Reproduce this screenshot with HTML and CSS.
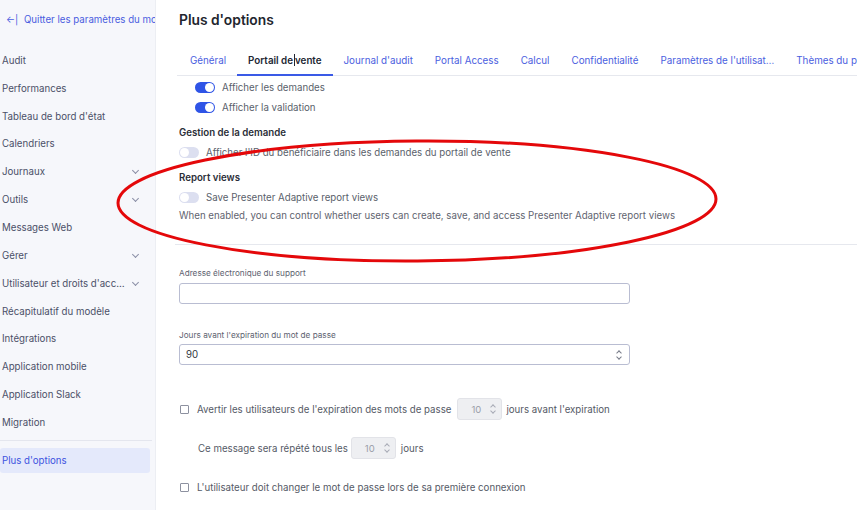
FILE: index.html
```html
<!DOCTYPE html>
<html lang="fr">
<head>
<meta charset="utf-8">
<title>Plus d'options</title>
<link rel="stylesheet" href="styles.css">
</head>
<body>
<div class="app">
  <aside class="sidebar">
    <a class="back"><span class="back-arrow">←|</span> Quitter les paramètres du mo</a>
    <ul class="nav">
      <li class="nav-item">Audit</li>
      <li class="nav-item">Performances</li>
      <li class="nav-item">Tableau de bord d'état</li>
      <li class="nav-item">Calendriers</li>
      <li class="nav-item">Journaux <span class="chev"></span></li>
      <li class="nav-item">Outils <span class="chev"></span></li>
      <li class="nav-item">Messages Web</li>
      <li class="nav-item">Gérer <span class="chev"></span></li>
      <li class="nav-item">Utilisateur et droits d'acc… <span class="chev"></span></li>
      <li class="nav-item">Récapitulatif du modèle</li>
      <li class="nav-item">Intégrations</li>
      <li class="nav-item">Application mobile</li>
      <li class="nav-item">Application Slack</li>
      <li class="nav-item">Migration</li>
    </ul>
    <div class="nav-sep"></div>
    <div class="nav-item active">Plus d'options</div>
  </aside>

  <main class="main">
    <h1 class="title">Plus d'options</h1>
    <nav class="tabs">
      <span class="tab">Général</span>
      <span class="tab current">Portail de<span class="caret"></span>vente</span>
      <span class="tab">Journal d'audit</span>
      <span class="tab">Portal Access</span>
      <span class="tab">Calcul</span>
      <span class="tab">Confidentialité</span>
      <span class="tab">Paramètres de l'utilisat…</span>
      <span class="tab">Thèmes du p</span>
    </nav>

    <div class="toggles indented">
      <div class="toggle-row"><span class="switch on"></span>Afficher les demandes</div>
      <div class="toggle-row"><span class="switch on"></span>Afficher la validation</div>
    </div>

    <h2 class="section">Gestion de la demande</h2>
    <div class="toggle-row"><span class="switch"></span>Afficher l'ID du bénéficiaire dans les demandes du portail de vente</div>

    <h2 class="section">Report views</h2>
    <div class="toggle-row"><span class="switch"></span>Save Presenter Adaptive report views</div>
    <p class="desc">When enabled, you can control whether users can create, save, and access Presenter Adaptive report views</p>

    <hr class="rule">

    <label class="field-label">Adresse électronique du support</label>
    <div class="input"></div>

    <label class="field-label second">Jours avant l'expiration du mot de passe</label>
    <div class="input select">90<span class="spin"></span></div>

    <div class="check-row first">
      <span class="box"></span>Avertir les utilisateurs de l'expiration des mots de passe
      <span class="mini">10<span class="spin"></span></span>jours avant l'expiration
    </div>
    <div class="check-row repeat">
      Ce message sera répété tous les
      <span class="mini">10<span class="spin"></span></span><span class="gap">jours</span>
    </div>
    <div class="check-row last">
      <span class="box"></span>L'utilisateur doit changer le mot de passe lors de sa première connexion
    </div>
  </main>
</div>

<svg class="annotation" width="857" height="510" viewBox="0 0 857 510">
  <ellipse cx="417" cy="201" rx="299" ry="60" fill="none" stroke="#e4080a" stroke-width="3" transform="rotate(-0.4 417 201)"/>
</svg>
</body>
</html>
```

FILE: styles.css
```css
* { box-sizing: border-box; }
html, body { margin: 0; padding: 0; }
body {
  font-family: Inter, "Noto Sans", "Liberation Sans", sans-serif;
  font-size: 9.7px;
  color: #555a66;
  background: #fff;
  width: 857px;
  height: 510px;
  overflow: hidden;
  position: relative;
}
.app { display: flex; height: 510px; }

/* Sidebar */
.sidebar {
  width: 156px;
  flex: none;
  background: #f6f7fb;
  border-right: 1px solid #eceef3;
  overflow: hidden;
  white-space: nowrap;
}
.back {
  display: block;
  color: #4a5de0;
  padding: 13px 0 0 6px;
  height: 47px;
  line-height: 14px;
  font-size: 9.7px;
}
.back-arrow { font-size: 9.5px; margin-right: 3px; }
.nav { list-style: none; margin: 0; padding: 0; }
.nav-item {
  height: 27.85px;
  line-height: 28px;
  padding-left: 2px;
  color: #4b5068;
  font-size: 9.7px;
  display: flex;
  align-items: center;
  width: 150px;
}
.chev {
  margin-left: auto;
  margin-right: 12px;
  width: 5px;
  height: 5px;
  border-right: 1px solid #8a8fa6;
  border-bottom: 1px solid #8a8fa6;
  transform: rotate(45deg);
  margin-top: -3px;
}
.nav-sep { height: 1px; background: #e4e6ee; margin: 3px 4px 7px 0; width: 152px; }
.nav-item.active {
  background: #e4e9fb;
  color: #3d54e0;
  border-radius: 3px;
  height: 25px;
  line-height: 25px;
}

/* Main */
.main { flex: 1; padding-left: 23px; min-width: 0; overflow: hidden; }
.title {
  font-size: 13.8px;
  font-weight: 600;
  color: #22252e;
  margin: 11px 0 0;
  line-height: 18px;
}
.tabs {
  display: flex;
  margin-top: 18px;
  border-bottom: 1px solid #e6e8ee;
  white-space: nowrap;
  margin-left: -2px;
  padding-left: 2px;
}
.tab {
  padding: 0 11px;
  height: 28px;
  line-height: 28px;
  color: #4a5ee0;
  font-size: 9.8px;
  flex: none;
}
.tab.current {
  color: #222633;
  font-weight: 600;
  border-bottom: 2px solid #3a5ae6;
  height: 29px;
  margin-bottom: -1px;
}
.caret {
  display: inline-block;
  width: 1px;
  height: 12px;
  background: #222633;
  vertical-align: -2px;
  margin: 0 0 0 1px;
}

.toggles { margin-top: 1px; }
.indented { padding-left: 16px; }
.toggle-row {
  height: 20px;
  display: flex;
  align-items: center;
  color: #5a5f6b;
  font-size: 9.7px;
  white-space: nowrap;
}
.switch {
  width: 20px;
  height: 11px;
  border-radius: 6px;
  background: #dcdff0;
  position: relative;
  margin-right: 7px;
  flex: none;
}
.switch::after {
  content: "";
  position: absolute;
  left: 1px;
  top: 1px;
  width: 9px;
  height: 9px;
  border-radius: 50%;
  background: #fff;
}
.switch.on { background: #2f54e6; }
.switch.on::after { left: 10px; }

.section {
  font-size: 9.7px;
  font-weight: 600;
  color: #2b2e38;
  margin: 9px 0 0;
  line-height: 14px;
}
.section + .toggle-row { margin-top: 2px; }
.desc {
  margin: 2px 0 0;
  line-height: 14px;
  color: #5f6470;
  font-size: 9.7px;
  white-space: nowrap;
}
.rule {
  border: none;
  border-top: 1px solid #e6e8ee;
  margin: 21px 0 0 -4px;
}

.field-label {
  display: block;
  font-size: 8.2px;
  color: #5d6270;
  line-height: 12px;
  margin-top: 22px;
}
.field-label.second { margin-top: 25px; }
.input {
  width: 451px;
  height: 21px;
  margin-top: 4px;
  border: 1px solid #b9bdd2;
  border-radius: 3px;
  background: #fff;
}
.input.select {
  margin-top: 3px;
  display: flex;
  align-items: center;
  padding-left: 6px;
  color: #333741;
  font-size: 9.7px;
}
.spin {
  margin-left: auto;
  width: 8px;
  height: 12px;
  position: relative;
  flex: none;
}
.spin::before, .spin::after {
  content: "";
  position: absolute;
  left: 2px;
  width: 3px;
  height: 3px;
  border-left: 1px solid #777b88;
  border-top: 1px solid #777b88;
}
.spin::before { top: 2px; transform: rotate(45deg); }
.spin::after { top: 6px; transform: rotate(225deg); }
.input.select .spin { margin-right: 6px; }

.check-row {
  display: flex;
  align-items: center;
  font-size: 9.7px;
  color: #555a66;
  white-space: nowrap;
}
.check-row.first { margin-top: 33px; height: 22px; }
.check-row.repeat { margin-top: 17px; height: 22px; padding-left: 19px; }
.check-row.last { margin-top: 18px; height: 20px; }
.box {
  width: 9px;
  height: 9px;
  border: 1px solid #8d91a0;
  border-radius: 1px;
  margin: 0 8px 0 1px;
  flex: none;
  background: #fff;
}
.mini {
  display: inline-flex;
  align-items: center;
  width: 45px;
  height: 22px;
  background: #eeeff2;
  border: 1px solid #e2e3e8;
  border-radius: 3px;
  margin: 0 4px 0 6px;
  padding-left: 13px;
  color: #9a9ea9;
  font-size: 9.5px;
}
.repeat .mini { margin-left: 3px; }
.mini .spin { margin-right: 4px; }
.mini .spin::before, .mini .spin::after { border-color: #a8abb6; }
.gap { margin-left: 1px; }

.annotation {
  position: absolute;
  left: 0;
  top: 0;
  pointer-events: none;
}
```
